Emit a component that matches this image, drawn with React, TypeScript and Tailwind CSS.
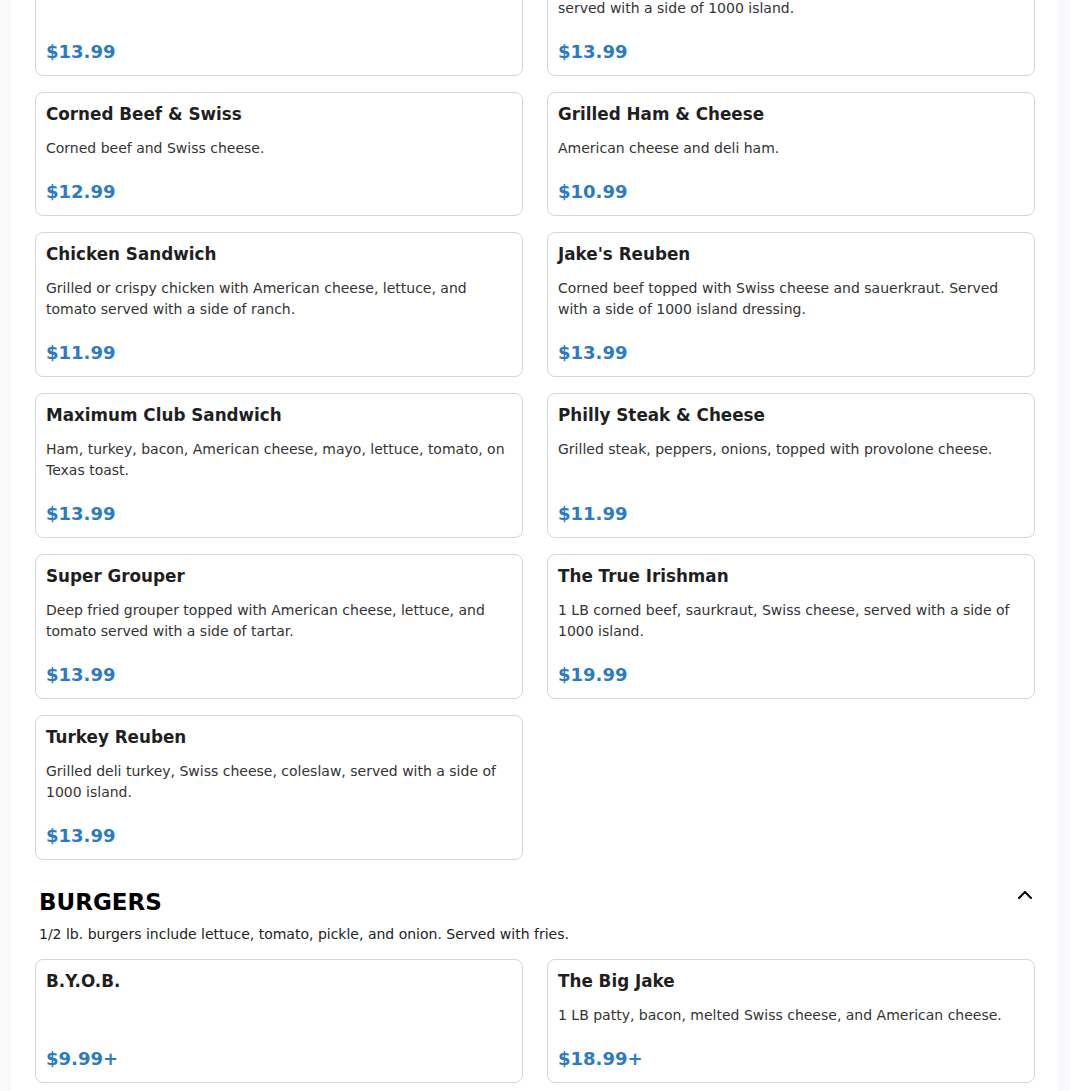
import React from 'react';
import { ChevronUp } from 'lucide-react';

interface MenuItem {
  name: string;
  desc?: string;
  price: string;
}

const sandwiches: MenuItem[] = [
  { name: 'Chicken Salad Sandwich', desc: 'Homemade chicken salad with lettuce and tomato.', price: '$13.99' },
  { name: 'Pastrami Reuben', desc: 'Grilled pastrami, Swiss cheese, and sauerkraut on marble rye,\nserved with a side of 1000 island.', price: '$13.99' },
  { name: 'Corned Beef & Swiss', desc: 'Corned beef and Swiss cheese.', price: '$12.99' },
  { name: 'Grilled Ham & Cheese', desc: 'American cheese and deli ham.', price: '$10.99' },
  { name: 'Chicken Sandwich', desc: 'Grilled or crispy chicken with American cheese, lettuce, and tomato served with a side of ranch.', price: '$11.99' },
  { name: "Jake's Reuben", desc: 'Corned beef topped with Swiss cheese and sauerkraut. Served with a side of 1000 island dressing.', price: '$13.99' },
  { name: 'Maximum Club Sandwich', desc: 'Ham, turkey, bacon, American cheese, mayo, lettuce, tomato, on Texas toast.', price: '$13.99' },
  { name: 'Philly Steak & Cheese', desc: 'Grilled steak, peppers, onions, topped with provolone cheese.', price: '$11.99' },
  { name: 'Super Grouper', desc: 'Deep fried grouper topped with American cheese, lettuce, and tomato served with a side of tartar.', price: '$13.99' },
  { name: 'The True Irishman', desc: '1 LB corned beef, saurkraut, Swiss cheese, served with a side of 1000 island.', price: '$19.99' },
  { name: 'Turkey Reuben', desc: 'Grilled deli turkey, Swiss cheese, coleslaw, served with a side of 1000 island.', price: '$13.99' },
];

const burgers: MenuItem[] = [
  { name: 'B.Y.O.B.', price: '$9.99+' },
  { name: 'The Big Jake', desc: '1 LB patty, bacon, melted Swiss cheese, and American cheese.', price: '$18.99+' },
];

const ItemCard: React.FC<{ item: MenuItem }> = ({ item }) => (
  <div className="flex flex-col rounded-lg border border-[#d6d6d6] bg-white px-2.5 py-3">
    <h3 className="text-[16.8px] leading-[18px] font-bold text-[#1f1f1f]">{item.name}</h3>
    {item.desc && (
      <p className="mt-[15px] whitespace-pre-line text-[14px] leading-[21px] text-[#333]">{item.desc}</p>
    )}
    <div className="mt-auto pt-[22px] text-[18px] leading-[22px] font-bold text-[#2a7bc4]">{item.price}</div>
  </div>
);

export default function App() {
  return (
    <div className="h-[1091px] overflow-hidden bg-[#f8f9fa] font-['DejaVu_Sans',sans-serif]">
      <div className="mx-auto max-w-[1048px] bg-white px-6 pb-10">
        <div className="-mt-[69px] grid grid-cols-2 gap-x-6 gap-y-4">
          {sandwiches.map((s) => (
            <ItemCard key={s.name} item={s} />
          ))}
        </div>

        <section className="mt-[23px]">
          <div className="flex items-start justify-between">
            <h2 className="mt-[3px] pl-1 text-[23px] leading-8 font-bold text-black">BURGERS</h2>
            <button className="-mr-0.5 text-black" aria-label="Collapse burgers">
              <ChevronUp size={24} strokeWidth={2} />
            </button>
          </div>
          <p className="mt-1.5 pl-1 text-[14px] leading-[21px] text-[#222]">
            1/2 lb. burgers include lettuce, tomato, pickle, and onion. Served with fries.
          </p>
          <div className="mt-3.5 grid grid-cols-2 gap-x-6 gap-y-4">
            {burgers.map((b) => (
              <ItemCard key={b.name} item={b} />
            ))}
          </div>
        </section>
      </div>
    </div>
  );
}
